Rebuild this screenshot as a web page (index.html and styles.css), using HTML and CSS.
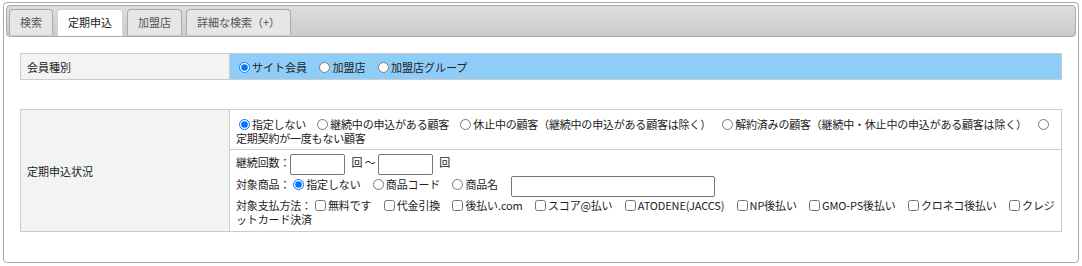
FILE: index.html
```html
<!DOCTYPE html>
<html lang="ja">
<head>
  <meta charset="UTF-8" />
  <title>検索</title>
  <link rel="stylesheet" href="styles.css">
</head>
<body>
  <div class="tabs">
    <ul class="tab-nav">
      <li><a href="#">検索</a></li>
      <li class="active"><a href="#">定期申込</a></li>
      <li><a href="#">加盟店</a></li>
      <li><a href="#">詳細な検索（+）</a></li>
    </ul>
    <div class="tab-panel">
      <table class="form-table">
        <tr>
          <th>会員種別</th>
          <td class="blue">
            <label><input type="radio" name="member" checked>サイト会員</label>
            <label><input type="radio" name="member">加盟店</label>
            <label><input type="radio" name="member">加盟店グループ</label>
          </td>
        </tr>
      </table>

      <table class="form-table second">
        <tr>
          <th rowspan="2">定期申込状況</th>
          <td class="status">
            <input type="radio" name="status" id="st1" checked><label for="st1">指定しない</label>
            <input type="radio" name="status" id="st2"><label for="st2">継続中の申込がある顧客</label>
            <input type="radio" name="status" id="st3"><label for="st3">休止中の顧客（継続中の申込がある顧客は除く）</label>
            <input type="radio" name="status" id="st4"><label for="st4">解約済みの顧客（継続中・休止中の申込がある顧客は除く）</label>
            <input type="radio" name="status" id="st5"><wbr><label for="st5">定期契約が一度もない顧客</label>
          </td>
        </tr>
        <tr>
          <td class="detail">
            <div class="line">継続回数：<input type="text" class="num"> 回 ～ <input type="text" class="num"> 回</div>
            <div class="line">対象商品：<label><input type="radio" name="item" checked>指定しない</label>
              <label><input type="radio" name="item">商品コード</label>
              <label><input type="radio" name="item">商品名</label>
              <input type="text" class="name">
            </div>
            <div class="line">対象支払方法：<label><input type="checkbox">無料です</label>
              <label><input type="checkbox">代金引換</label>
              <label><input type="checkbox">後払い.com</label>
              <label><input type="checkbox">スコア@払い</label>
              <label><input type="checkbox">ATODENE(JACCS)</label>
              <label><input type="checkbox">NP後払い</label>
              <label><input type="checkbox">GMO-PS後払い</label>
              <label><input type="checkbox">クロネコ後払い</label>
              <label><input type="checkbox">クレジットカード決済</label>
            </div>
          </td>
        </tr>
      </table>
    </div>
  </div>
</body>
</html>
```

FILE: styles.css
```css
body {
  margin: 0;
  padding: 2px 3px 0 3px;
  font-family: "Noto Sans CJK JP", "Noto Sans", sans-serif;
  font-size: 11px;
  color: #222;
  background: #fff;
}
.tabs {
  border: 1px solid #aaa;
  border-radius: 4px;
  padding: 2px;
  height: 261px;
  box-sizing: border-box;
}
.tab-nav {
  list-style: none;
  margin: 0;
  padding: 3px 2px 0 2px;
  height: 27px;
  border: 1px solid #aaa;
  border-radius: 4px;
  background: linear-gradient(#dedede, #cbcbcb);
  display: flex;
  gap: 4px;
}
.tab-nav li {
  border: 1px solid #aaa;
  border-bottom: none;
  border-radius: 4px 4px 0 0;
  background: #e6e6e6;
  height: 26px;
  box-sizing: border-box;
}
.tab-nav li a {
  display: block;
  padding: 0 10px;
  line-height: 25px;
  font-size: 11px;
  color: #555;
  text-decoration: none;
}
.tab-nav li.active {
  background: #fff;
  border-color: #d3d3d3;
  height: 27px;
  margin-bottom: -1px;
}
.tab-nav li.active a {
  color: #222;
}
.tab-panel {
  padding: 16px 14px 0 14px;
}
.form-table {
  width: 100%;
  border-collapse: collapse;
  margin-bottom: 29px;
}
.form-table th,
.form-table td {
  border: 1px solid #ccc;
  font-weight: normal;
  text-align: left;
}
.form-table th {
  width: 196px;
  background: #f2f4f3;
  padding: 0 6px;
  height: 25px;
  vertical-align: middle;
}
.form-table td {
  padding: 5px 6px;
  line-height: 14px;
}
.form-table td.blue {
  background: #8fcdf9;
}
.form-table label {
  margin-right: 7px;
}
.form-table input[type="radio"],
.form-table input[type="checkbox"] {
  width: 11px;
  height: 11px;
  margin: 0 2px 0 3px;
  vertical-align: -1px;
}
.form-table td.status {
  padding: 7px 6px 4px 6px;
  letter-spacing: -0.2px;
}
.form-table td.status label {
  margin-right: 6px;
}
.form-table td.status label:last-child {
  margin-right: 0;
}
.form-table td.detail {
  padding: 4px 6px 4px 6px;
  letter-spacing: -0.15px;
}
.line {
  line-height: 14px;
  margin-bottom: 1px;
}
.num {
  width: 51px;
  height: 17px;
  padding: 1px;
  border: 1px solid #767676;
  border-radius: 2px;
  margin: 0 4px 0 0;
  vertical-align: middle;
}
.name {
  width: 200px;
  height: 17px;
  padding: 1px;
  border: 1px solid #767676;
  border-radius: 2px;
  margin-left: 4px;
  vertical-align: middle;
}
```
